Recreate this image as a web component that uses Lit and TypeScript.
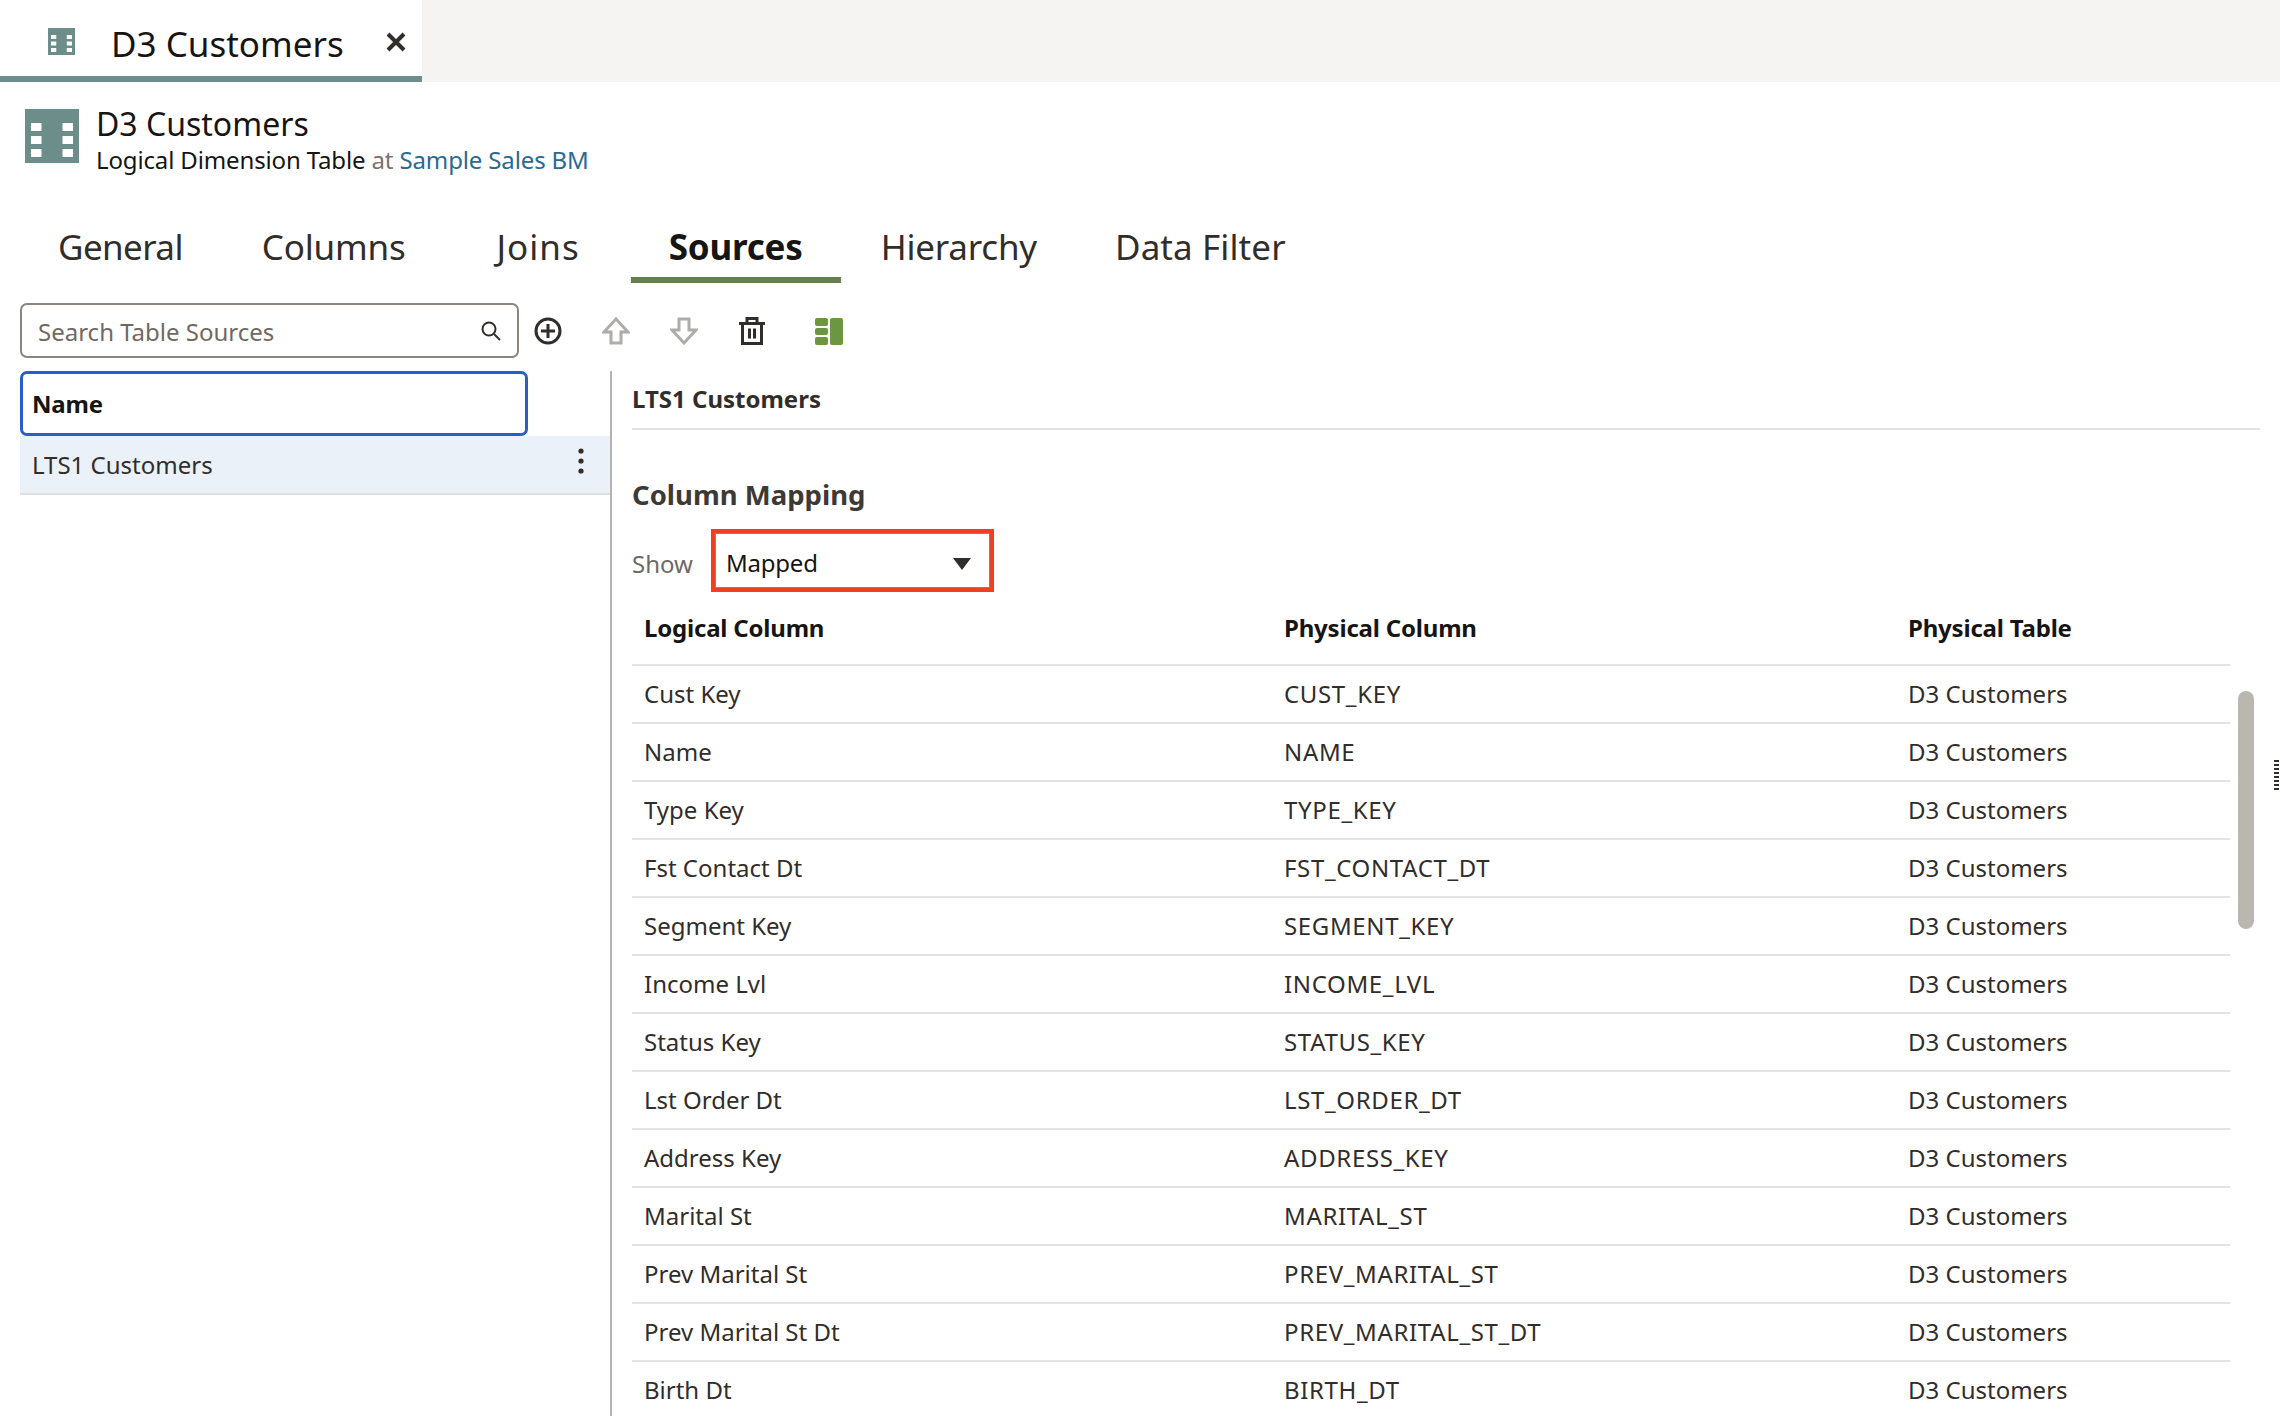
import { LitElement, html, css, svg } from 'lit';
import { customElement } from 'lit/decorators.js';

const ROWS = [
  ['Cust Key', 'CUST_KEY'],
  ['Name', 'NAME'],
  ['Type Key', 'TYPE_KEY'],
  ['Fst Contact Dt', 'FST_CONTACT_DT'],
  ['Segment Key', 'SEGMENT_KEY'],
  ['Income Lvl', 'INCOME_LVL'],
  ['Status Key', 'STATUS_KEY'],
  ['Lst Order Dt', 'LST_ORDER_DT'],
  ['Address Key', 'ADDRESS_KEY'],
  ['Marital St', 'MARITAL_ST'],
  ['Prev Marital St', 'PREV_MARITAL_ST'],
  ['Prev Marital St Dt', 'PREV_MARITAL_ST_DT'],
  ['Birth Dt', 'BIRTH_DT'],
];

const TABS = ['General', 'Columns', 'Joins', 'Sources', 'Hierarchy', 'Data Filter'];

// table glyph: teal block with two columns of three white cells
const tableIcon = (cls: string) => html`<svg class=${cls} viewBox="0 0 54 54">
  <rect width="54" height="54" fill="#6c8d8a" />
  ${[14, 27, 40].map((y) =>
    [6, 37.5].map((x) => svg`<rect x=${x} y=${y} width="10.5" height="8" fill="#fff" />`),
  )}
</svg>`;

@customElement('app-root')
export class AppRoot extends LitElement {
  static styles = css`
    :host {
      display: block;
      position: relative;
      width: 2280px;
      height: 1416px;
      overflow: hidden;
      background: #fff;
      font-family: 'Noto Sans', sans-serif;
      color: #312d2a;
    }
    .tabbar {
      height: 82px;
      background: #f5f4f2;
    }
    .doc-tab {
      box-sizing: border-box;
      width: 422px;
      height: 82px;
      background: #fff;
      border-bottom: 6px solid #6c8d8a;
      display: flex;
      align-items: center;
      padding-left: 48px;
    }
    .doc-icon {
      flex: none;
      width: 27px;
      height: 27px;
      margin-top: 7px;
    }
    .doc-title {
      flex: none;
      margin: 11px 0 0 36px;
      font-size: 35px;
      color: #161513;
      width: 275px;
      white-space: nowrap;
    }
    .close {
      flex: none;
      width: 20px;
      height: 20px;
      margin-top: 8px;
    }
    .head {
      display: flex;
      padding: 27px 0 0 25px;
      height: 87px;
    }
    .head-icon {
      width: 54px;
      height: 54px;
      margin-right: 17px;
    }
    .head-title {
      font-size: 32px;
      line-height: 36px;
      color: #161513;
      margin-top: -3px;
    }
    .head-sub {
      font-size: 24px;
      line-height: 32px;
      color: #161513;
      margin-top: 2px;
      letter-spacing: -0.14px;
    }
    .head-sub .at {
      color: #7a736e;
    }
    .head-sub .link {
      color: #2a6a92;
    }
    .tabs {
      display: flex;
      height: 60px;
      padding: 27px 0 0 20px;
    }
    .tab {
      box-sizing: border-box;
      height: 60px;
      padding: 0 38px;
      font-size: 35px;
      line-height: 48px;
      white-space: nowrap;
      color: #312d2a;
      letter-spacing: -0.2px;
    }
    .tab:nth-child(1) {
      padding-right: 41px;
      letter-spacing: -0.6px;
    }
    .tab:nth-child(3) {
      padding: 0 51px 0 53px;
      letter-spacing: 1px;
    }
    .tab:nth-child(5) {
      margin-left: 2px;
    }
    .tab:nth-child(6) {
      margin-left: 2px;
      letter-spacing: 0.1px;
    }
    .tab.on {
      font-weight: 700;
      color: #161513;
      border-bottom: 6px solid #667f4f;
    }
    .toolbar {
      display: flex;
      align-items: center;
      height: 55px;
      margin-top: 20px;
      padding-left: 20px;
    }
    .search {
      box-sizing: border-box;
      width: 499px;
      height: 55px;
      border: 2px solid #8a8580;
      border-radius: 7px;
      display: flex;
      align-items: center;
      justify-content: space-between;
      padding: 0 15px 0 16px;
      font-size: 24px;
      color: #6f6964;
    }
    .search span {
      margin-top: 1px;
    }
    .tool {
      display: block;
      width: 28px;
      height: 28px;
    }
    .tools {
      display: flex;
      gap: 40px;
      margin-left: 15px;
    }
    .tools .grid {
      margin-left: 9px;
    }
    .body {
      display: grid;
      grid-template-columns: 610px 2px 1fr;
      margin-top: 13px;
      height: 1046px;
    }
    .left {
      padding-left: 20px;
    }
    .name-box {
      box-sizing: border-box;
      width: 508px;
      height: 65px;
      border: 3px solid #2560c4;
      border-radius: 7px;
      padding-left: 9px;
      font-size: 24px;
      font-weight: 700;
      line-height: 59px;
      color: #161513;
      letter-spacing: -0.2px;
    }
    .source {
      box-sizing: border-box;
      height: 59px;
      background: #eaf1f8;
      border-bottom: 2px solid #e0dfdd;
      display: flex;
      align-items: center;
      justify-content: space-between;
      padding: 0 25px 0 12px;
      font-size: 24px;
    }
    .kebab {
      width: 8px;
      height: 28px;
      margin-top: -8px;
    }
    .split {
      background: #b5b2af;
    }
    .right {
      padding: 1px 20px 0 20px;
    }
    .detail-title {
      box-sizing: border-box;
      height: 58px;
      border-bottom: 2px solid #e4e3e1;
      font-size: 24px;
      font-weight: 700;
      line-height: 54px;
    }
    h2 {
      margin: 45px 0 0;
      font-size: 27.5px;
      line-height: 40px;
      font-weight: 700;
      color: #3d3935;
    }
    .show {
      display: flex;
      align-items: center;
      margin-top: 14px;
      font-size: 24px;
      color: #6f6964;
    }
    .show > span {
      margin-top: 5px;
    }
    .select-wrap {
      margin-left: 18px;
      border: 4px solid #ef4023;
      width: 283px;
      height: 63px;
      box-sizing: border-box;
    }
    .select {
      box-sizing: border-box;
      height: 55px;
      border: 1px solid #8a8580;
      display: flex;
      align-items: center;
      justify-content: space-between;
      padding: 3px 18px 0 10px;
      color: #161513;
      letter-spacing: -0.2px;
    }
    .arrow {
      width: 18px;
      height: 12px;
      margin-top: 3px;
    }
    table {
      width: 1598px;
      border-collapse: collapse;
      margin-top: 7px;
      table-layout: fixed;
      font-size: 24px;
    }
    th,
    td {
      text-align: left;
      padding: 0 0 0 12px;
      white-space: nowrap;
      border-bottom: 2px solid #e4e3e1;
      box-sizing: border-box;
    }
    th {
      height: 66px;
      padding-bottom: 8px;
      font-weight: 700;
      color: #161513;
      letter-spacing: -0.2px;
    }
    td {
      height: 58px;
      padding-bottom: 2px;
    }
    td.phys {
      letter-spacing: 0.65px;
    }
    .scroll {
      position: absolute;
      left: 2238px;
      top: 691px;
      width: 16px;
      height: 238px;
      border-radius: 8px;
      background: #bab6b0;
    }
    .grip {
      position: absolute;
      left: 2274px;
      top: 760px;
      width: 5px;
      height: 30px;
      background: repeating-linear-gradient(#312d2a 0 2px, transparent 2px 4px);
    }
  `;

  render() {
    return html`
      <div class="tabbar">
        <div class="doc-tab">
          ${tableIcon('doc-icon')}
          <span class="doc-title">D3 Customers</span>
          <svg class="close" viewBox="0 0 20 20">
            <path d="M2 2l16 16M18 2L2 18" stroke="#312d2a" stroke-width="4" fill="none" />
          </svg>
        </div>
      </div>
      <div class="head">
        ${tableIcon('head-icon')}
        <div>
          <div class="head-title">D3 Customers</div>
          <div class="head-sub">
            Logical Dimension Table <span class="at">at</span> <span class="link">Sample Sales BM</span>
          </div>
        </div>
      </div>
      <div class="tabs">
        ${TABS.map((t) => html`<div class="tab ${t === 'Sources' ? 'on' : ''}">${t}</div>`)}
      </div>
      <div class="toolbar">
        <div class="search">
          <span>Search Table Sources</span>
          <svg width="22" height="22" viewBox="0 0 22 22" fill="none" stroke="#312d2a" stroke-width="2">
            <circle cx="9" cy="9" r="6.5" /><path d="M14 14l6 6" />
          </svg>
        </div>
        <div class="tools">
          <svg class="tool" viewBox="0 0 28 28" fill="none" stroke="#312d2a" stroke-width="3">
            <circle cx="14" cy="14" r="12" /><path d="M14 7v14M7 14h14" />
          </svg>
          <svg class="tool" viewBox="0 0 28 28" fill="none" stroke="#aeacaa" stroke-width="3">
            <path d="M14 2L2 15h7v11h10V15h7z" />
          </svg>
          <svg class="tool" viewBox="0 0 28 28" fill="none" stroke="#aeacaa" stroke-width="3">
            <path d="M14 26L2 13h7V2h10v11h7z" />
          </svg>
          <svg class="tool" viewBox="0 0 28 28" fill="none" stroke="#312d2a" stroke-width="3">
            <path d="M1 6.5h26M9 6V1.5h10V6M4.5 7v19.5h19V7M11.5 11.5v10M16.5 11.5v10" />
          </svg>
          <svg class="tool grid" viewBox="0 0 28 28" fill="#6c963f">
            <rect x="0" y="1" width="13" height="8" rx="2" />
            <rect x="0" y="11" width="13" height="7" rx="2" />
            <rect x="0" y="20" width="13" height="8" rx="2" />
            <rect x="15" y="1" width="13" height="27" rx="2" />
          </svg>
        </div>
      </div>
      <div class="body">
        <div class="left">
          <div class="name-box">Name</div>
          <div class="source">
            <span>LTS1 Customers</span>
            <svg class="kebab" viewBox="0 0 8 28" fill="#312d2a">
              <circle cx="4" cy="4" r="2.6" /><circle cx="4" cy="14" r="2.6" /><circle cx="4" cy="24" r="2.6" />
            </svg>
          </div>
        </div>
        <div class="split"></div>
        <div class="right">
          <div class="detail-title">LTS1 Customers</div>
          <h2>Column Mapping</h2>
          <div class="show">
            <span>Show</span>
            <div class="select-wrap">
              <div class="select">
                <span>Mapped</span>
                <svg class="arrow" viewBox="0 0 18 12"><path d="M0 0h18L9 12z" fill="#312d2a" /></svg>
              </div>
            </div>
          </div>
          <table>
            <colgroup><col style="width:640px" /><col style="width:624px" /><col /></colgroup>
            <tr><th>Logical Column</th><th>Physical Column</th><th>Physical Table</th></tr>
            ${ROWS.map((r) => html`<tr><td>${r[0]}</td><td class="phys">${r[1]}</td><td>D3 Customers</td></tr>`)}
          </table>
        </div>
      </div>
      <div class="scroll"></div>
      <div class="grip"></div>
    `;
  }
}
